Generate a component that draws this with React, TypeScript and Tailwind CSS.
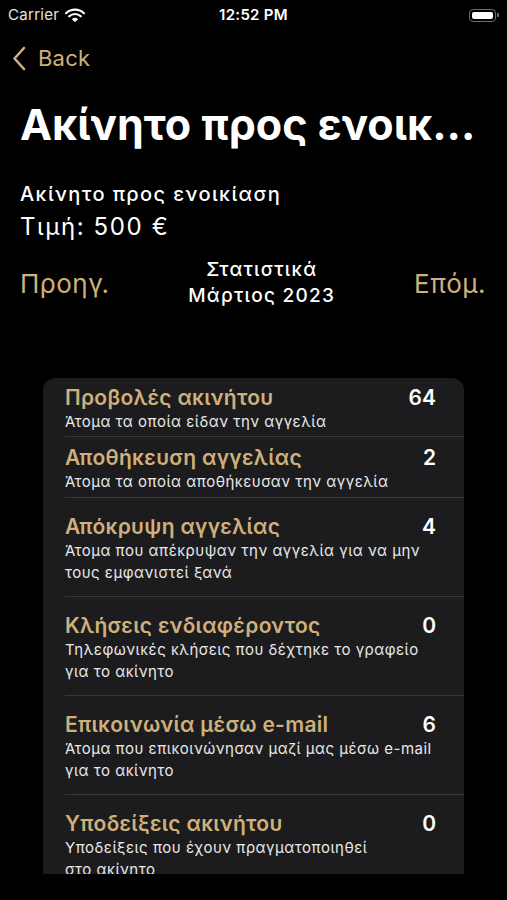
import React from "react";

const gold = "text-[#cfb07b]";

type Row = { title: string; sub: string[]; value: string };

const rows: Row[] = [
  { title: "Προβολές ακινήτου", sub: ["Άτομα τα οποία είδαν την αγγελία"], value: "64" },
  { title: "Αποθήκευση αγγελίας", sub: ["Άτομα τα οποία αποθήκευσαν την αγγελία"], value: "2" },
  { title: "Απόκρυψη αγγελίας", sub: ["Άτομα που απέκρυψαν την αγγελία για να μην", "τους εμφανιστεί ξανά"], value: "4" },
  { title: "Κλήσεις ενδιαφέροντος", sub: ["Τηλεφωνικές κλήσεις που δέχτηκε το γραφείο", "για το ακίνητο"], value: "0" },
  { title: "Επικοινωνία μέσω e-mail", sub: ["Άτομα που επικοινώνησαν μαζί μας μέσω e-mail", "για το ακίνητο"], value: "6" },
  { title: "Υποδείξεις ακινήτου", sub: ["Υποδείξεις που έχουν πραγματοποιηθεί", "στο ακίνητο"], value: "0" },
];

function Wifi() {
  return (
    <svg width="20" height="14" viewBox="0 0 20 14" className="ml-[6px]">
      <path d="M1 5.2 A13 13 0 0 1 19 5.2" stroke="#fff" strokeWidth="2.2" fill="none" strokeLinecap="round" />
      <path d="M4.2 8.3 A8.5 8.5 0 0 1 15.8 8.3" stroke="#fff" strokeWidth="2.2" fill="none" strokeLinecap="round" />
      <path d="M7.4 11.2 A4 4 0 0 1 12.6 11.2 L10 13.6 Z" fill="#fff" stroke="#fff" strokeWidth="1" strokeLinejoin="round" />
    </svg>
  );
}

function Battery() {
  return (
    <div className="flex items-center">
      <div className="w-[27px] h-[13px] rounded-[4px] border border-[#6b6b6b] p-[2px]">
        <div className="w-full h-full rounded-[2px] bg-white" />
      </div>
      <div className="w-[2px] h-[4px] rounded-r-[1px] bg-[#6b6b6b] ml-[1px]" />
    </div>
  );
}

export default function App() {
  return (
    <div
      className="w-[507px] h-[900px] bg-black text-white overflow-hidden flex flex-col"
      style={{ fontFamily: "Inter, 'Noto Sans', sans-serif" }}
    >
      {/* status bar */}
      <div className="h-[30px] flex items-center justify-between px-[8px] relative shrink-0">
        <div className="flex items-center">
          <span className="text-[15px] tracking-[0.3px] text-[#e6e6e6]">Carrier</span>
          <Wifi />
        </div>
        <span className="absolute left-0 right-0 text-center text-[15px] font-semibold tracking-[0.3px] pointer-events-none">
          12:52 PM
        </span>
        <Battery />
      </div>

      {/* nav */}
      <div className="h-[56px] flex items-center pl-[12px] shrink-0">
        <svg width="14" height="25" viewBox="0 0 14 25">
          <path d="M12 2 L2.5 12.5 L12 23" stroke="#cfb07b" strokeWidth="2.6" fill="none" strokeLinecap="round" strokeLinejoin="round" />
        </svg>
        <span className={`ml-[12px] text-[22px] tracking-[0.2px] ${gold}`}>Back</span>
      </div>

      {/* title */}
      <div className="mt-[13px] px-[20px] text-[43px] leading-[50px] font-bold whitespace-nowrap">
        Ακίνητο προς ενοικ...
      </div>

      <div className="mt-[32px] px-[20px] text-[20px] leading-[26px] font-medium tracking-[1.4px]">Ακίνητο προς ενοικίαση</div>
      <div className="mt-[5px] px-[20px] text-[24px] leading-[30px] tracking-[1.6px]">Τιμή: 500 €</div>

      <div className="mt-[15px] px-[20px] flex items-center justify-between">
        <span className={`text-[26px] ${gold} tracking-[0.5px]`}>Προηγ.</span>
        <div className="flex flex-col items-center text-[19px] leading-[26px] font-medium tracking-[1.3px]">
          <span>Στατιστικά</span>
          <span>Μάρτιος 2023</span>
        </div>
        <span className={`text-[26px] ${gold} tracking-[0.5px] pr-[1px]`}>Επόμ.</span>
      </div>

      <div className="mt-[69px] ml-[43px] w-[421px] h-[496px] shrink-0 bg-[#1c1c1e] rounded-t-[12px] overflow-hidden">
        {rows.map((r, i) => (
          <div key={i} className="pl-[22px]">
            <div
              className={`flex pr-[28px] ${
                i === 0 ? "pt-[7px] pb-[3px]" : i === 1 ? "pt-[8px] pb-[4px]" : "pt-[16px] pb-[12px]"
              } ${i < rows.length - 1 ? "border-b border-[#38383a]" : ""}`}
            >
              <div className="flex-1 min-w-0">
                <div className={`text-[21px] leading-[26px] font-semibold tracking-[0.3px] ${gold}`}>{r.title}</div>
                <div className="text-[15px] leading-[22px] tracking-[0.5px] text-[#e8e8e8]">
                  {r.sub.map((s, j) => (
                    <div key={j} className="whitespace-nowrap">{s}</div>
                  ))}
                </div>
              </div>
              <div className="shrink-0 text-[21px] leading-[26px] font-semibold text-white">{r.value}</div>
            </div>
          </div>
        ))}
      </div>
    </div>
  );
}
